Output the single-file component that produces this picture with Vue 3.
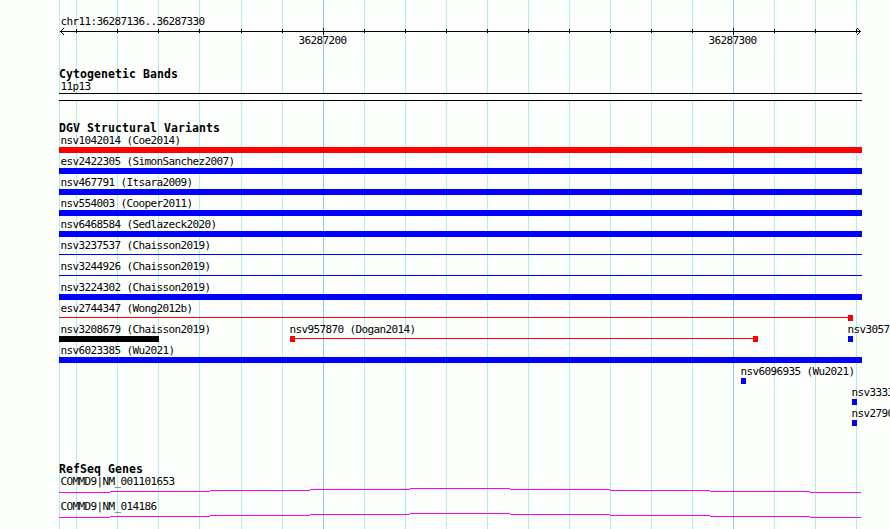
<script setup>
const minor = [59, 76, 117, 158, 199, 241, 282, 364, 405, 446, 487, 528, 569, 610, 651, 692, 774, 815, 856]
const major = [323, 733]
const ticks = minor.slice(1)

const full = (name, kind, color) => [{ name, x: 59, w: 803, kind, color }]
const rows = [
  full('nsv1042014 (Coe2014)', 'bar', 'red'),
  full('esv2422305 (SimonSanchez2007)', 'bar', 'blue'),
  full('nsv467791 (Itsara2009)', 'bar', 'blue'),
  full('nsv554003 (Cooper2011)', 'bar', 'blue'),
  full('nsv6468584 (Sedlazeck2020)', 'bar', 'blue'),
  full('nsv3237537 (Chaisson2019)', 'line', 'blue'),
  full('nsv3244926 (Chaisson2019)', 'line', 'blue'),
  full('nsv3224302 (Chaisson2019)', 'bar', 'blue'),
  [{ name: 'esv2744347 (Wong2012b)', x: 59, w: 794, kind: 'line', color: 'red', end: true }],
  [
    { name: 'nsv3208679 (Chaisson2019)', x: 59, w: 100, kind: 'bar', color: 'black' },
    { name: 'nsv957870 (Dogan2014)', x: 290, w: 468, kind: 'line', color: 'red', start: true, end: true, shift: true },
    { name: 'nsv3057', x: 848, w: 5, kind: 'bar', color: 'blue', shift: true }
  ],
  full('nsv6023385 (Wu2021)', 'bar', 'blue'),
  [{ name: 'nsv6096935 (Wu2021)', x: 741, w: 5, kind: 'bar', color: 'blue', shift: true }],
  [{ name: 'nsv3333', x: 852, w: 5, kind: 'bar', color: 'blue', shift: true }],
  [{ name: 'nsv2790', x: 852, w: 5, kind: 'bar', color: 'blue', shift: true }]
]
const genes = ['COMMD9|NM_001101653', 'COMMD9|NM_014186']
const genePath =
  'M59 4.5H110M110 3.5H210M210 2.5H310M310 1.5H410M410 .5H510M510 1.5H610M610 2.5H710M710 3.5H810M810 4.5H861'
</script>

<template>
  <main class="browser">
    <svg class="grid" width="890" height="529" shape-rendering="crispEdges">
      <rect v-for="x in minor" :key="x" :x="x" y="0" width="1" height="529" fill="#afeeee" />
      <rect v-for="x in major" :key="x" :x="x" y="0" width="1" height="529" fill="#87ceeb" />
    </svg>

    <header class="ruler">
      <div class="label">chr11:36287136..36287330</div>
      <svg class="scale" width="890" height="7" shape-rendering="crispEdges">
        <rect x="60" y="3" width="801" height="1" />
        <rect v-for="x in ticks" :key="x" :x="x" y="1" width="1" height="4" />
        <rect v-for="x in major" :key="x" :x="x" y="0" width="1" height="7" />
        <path d="M60 3h1v1h-1zM61 2h1v1h-1zM62 1h1v1h-1zM63 0h1v1h-1zM61 4h1v1h-1zM62 5h1v1h-1zM63 6h1v1h-1z" />
        <path d="M860 3h1v1h-1zM859 2h1v1h-1zM858 1h1v1h-1zM857 0h1v1h-1zM859 4h1v1h-1zM858 5h1v1h-1zM857 6h1v1h-1z" />
      </svg>
      <div class="numbers"><span>36287200</span><span>36287300</span></div>
    </header>

    <section class="cyto">
      <h2>Cytogenetic Bands</h2>
      <div class="label">11p13</div>
      <div class="band"></div>
    </section>

    <section class="variants">
      <h2>DGV Structural Variants</h2>
      <div v-for="(row, i) in rows" :key="i" class="row">
        <div v-for="f in row" :key="f.name" class="feature" :style="{ left: f.x + 'px' }">
          <div class="name" :class="{ shift: f.shift }">{{ f.name }}</div>
          <div class="glyph" :class="[f.kind, f.color]" :style="{ width: f.w + 'px' }">
            <i v-if="f.start"></i><b></b><i v-if="f.end"></i>
          </div>
        </div>
      </div>
    </section>

    <section class="genes">
      <h2>RefSeq Genes</h2>
      <div v-for="g in genes" :key="g" class="gene">
        <div class="label">{{ g }}</div>
        <svg width="890" height="5" shape-rendering="crispEdges">
          <path :d="genePath" stroke="#ff00ff" fill="none" />
        </svg>
      </div>
    </section>
  </main>
</template>

<style>
body {
  margin: 0;
  overflow: hidden;
}
</style>

<style scoped>
.browser {
  position: relative;
  width: 890px;
  height: 529px;
  overflow: hidden;
  background: #fdfffd;
  color: #000;
  font: 11px/13px "DejaVu Sans Mono", monospace;
  letter-spacing: -0.622px;
  white-space: pre;
  isolation: isolate;
}
svg {
  display: block;
}
.grid {
  position: absolute;
  inset: 0;
  z-index: -1;
}
.label {
  height: 13px;
  padding-left: 60.4px;
}
h2 {
  margin: 0;
  padding-left: 59px;
  height: 13px;
  font-size: 11.5px;
  line-height: 15px;
  font-weight: bold;
  letter-spacing: 0.077px;
}
.ruler {
  padding-top: 15px;
  height: 52px;
}
.numbers {
  display: flex;
  gap: 362px;
  padding-left: 298.4px;
  line-height: 11px;
}
.numbers span {
  width: 48px;
}
.cyto {
  height: 54px;
}
.band {
  box-sizing: border-box;
  width: 803px;
  height: 8px;
  margin-left: 59px;
  border: solid #000;
  border-width: 1px 0;
  background: #fdfffd;
}
.variants {
  height: 341px;
}
.row {
  position: relative;
  height: 21px;
}
.feature {
  position: absolute;
  top: 0;
}
.name {
  height: 13px;
  padding-left: 1.4px;
}
.name.shift {
  margin-left: -2px;
}
.glyph {
  display: flex;
  height: 6px;
}
.glyph b {
  flex: 1;
  background: currentColor;
}
.glyph i {
  width: 5px;
  background: currentColor;
}
.line b {
  height: 1px;
  margin-top: 2px;
  flex: 1;
}
.red {
  color: #f00;
}
.blue {
  color: #00f;
}
.black {
  color: #000;
}
.gene {
  height: 25px;
}
</style>
